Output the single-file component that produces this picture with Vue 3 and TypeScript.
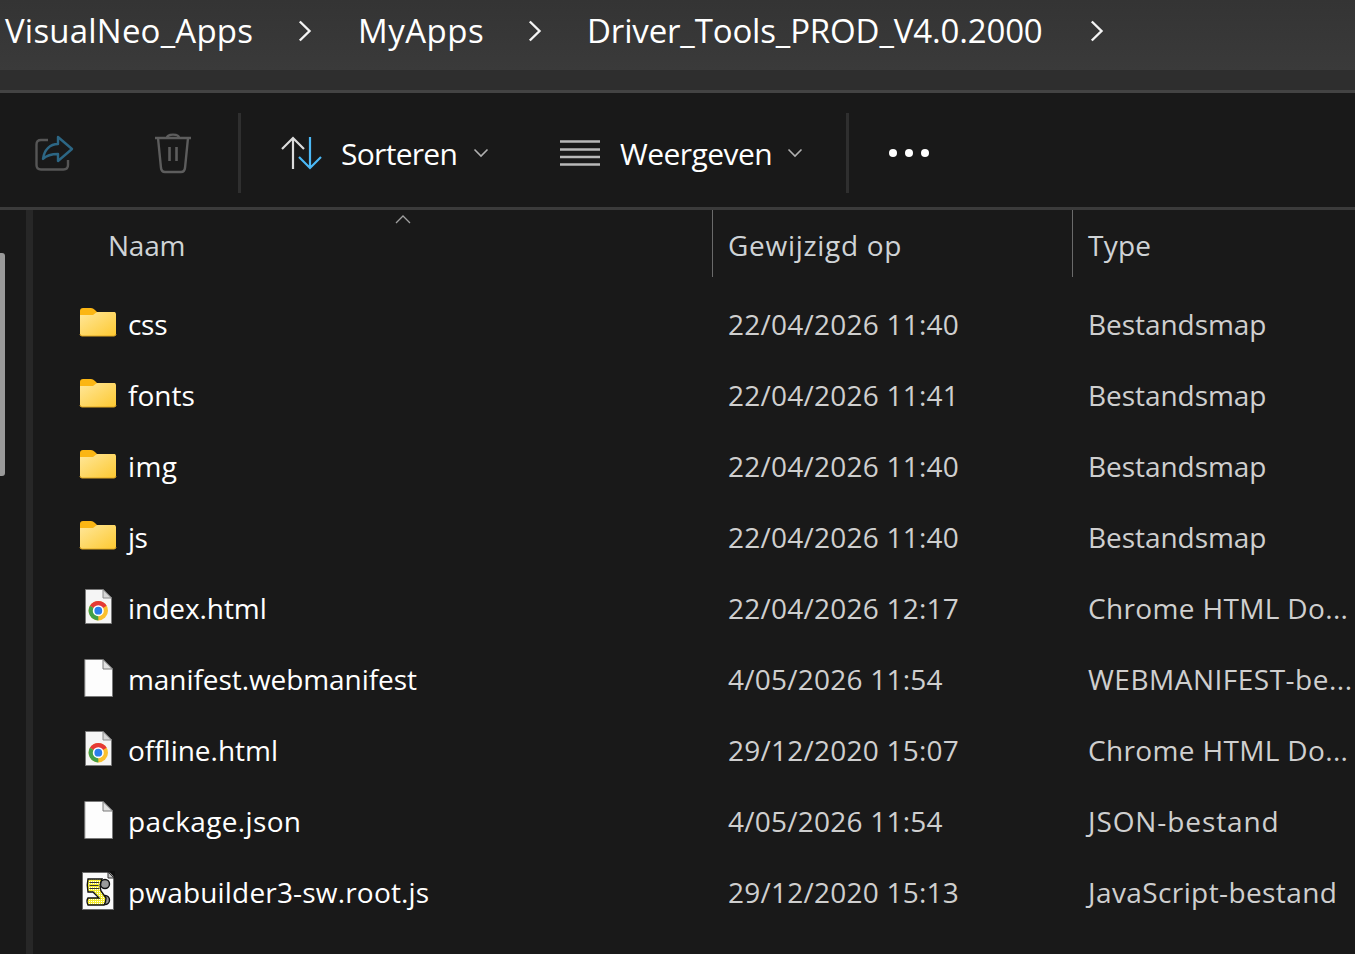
<script setup lang="ts">
type Kind = 'folder' | 'chrome' | 'blank' | 'script'
interface Row { name: string; date: string; type: string; kind: Kind; nameLs: number; typeLs: number }
const crumbs = [
  { label: 'VisualNeo_Apps', cls: 'c1' },
  { label: 'MyApps', cls: 'c2' },
  { label: 'Driver_Tools_PROD_V4.0.2000', cls: 'c3' },
]
const rows: Row[] = [
  { name: 'css', date: '22/04/2026 11:40', type: 'Bestandsmap', kind: 'folder', nameLs: -0.3, typeLs: -0.05 },
  { name: 'fonts', date: '22/04/2026 11:41', type: 'Bestandsmap', kind: 'folder', nameLs: 0, typeLs: -0.05 },
  { name: 'img', date: '22/04/2026 11:40', type: 'Bestandsmap', kind: 'folder', nameLs: 0.4, typeLs: -0.05 },
  { name: 'js', date: '22/04/2026 11:40', type: 'Bestandsmap', kind: 'folder', nameLs: -0.55, typeLs: -0.05 },
  { name: 'index.html', date: '22/04/2026 12:17', type: 'Chrome HTML Do...', kind: 'chrome', nameLs: -0.05, typeLs: 0.35 },
  { name: 'manifest.webmanifest', date: '4/05/2026 11:54', type: 'WEBMANIFEST-be...', kind: 'blank', nameLs: -0.07, typeLs: 0.5 },
  { name: 'offline.html', date: '29/12/2020 15:07', type: 'Chrome HTML Do...', kind: 'chrome', nameLs: -0.02, typeLs: 0.35 },
  { name: 'package.json', date: '4/05/2026 11:54', type: 'JSON-bestand', kind: 'blank', nameLs: 0.36, typeLs: 0.9 },
  { name: 'pwabuilder3-sw.root.js', date: '29/12/2020 15:13', type: 'JavaScript-bestand', kind: 'script', nameLs: 0.18, typeLs: 0.4 },
]
</script>

<template>
  <div class="window">
    <nav class="crumbs">
      <template v-for="c in crumbs" :key="c.label">
        <span class="crumb" :class="c.cls">{{ c.label }}</span>
        <svg class="sep" :class="c.cls" width="14" height="22" viewBox="0 0 14 22" fill="none">
          <path d="M1.800 1.500 L11.500 11 L1.800 20.500" stroke="#f4f4f4" stroke-width="2.400" />
        </svg>
      </template>
    </nav>
    <div class="strip"></div>
    <div class="toolbar">
      <svg class="t-share" width="40" height="38" viewBox="0 0 40 38" fill="none">
        <path d="M14 6 H7 Q2.500 6 2.500 10.500 V31 Q2.500 35.500 7 35.500 H29.500 Q34 35.500 34 31 V26" stroke="#565656" stroke-width="2.400" />
        <path d="M9 25 C10 16 16 10 24 10 V3 L38 15 L24 27 V20 C18 20 13 21 9 25 Z" stroke="#2c6684" stroke-width="2.400" stroke-linejoin="round" />
      </svg>
      <svg class="t-trash" width="38" height="42" viewBox="0 0 38 42" fill="none" stroke="#5d5d5d" stroke-width="2.4">
        <path d="M1 6 H37" />
        <path d="M13 6 C13 1.500 25 1.500 25 6" />
        <path d="M4 6 L7 36 Q7.500 40 11 40 H27 Q30.500 40 31 36 L34 6" />
        <path d="M15.500 15 V29 M22.500 15 V29" stroke-width="2.600" />
      </svg>
      <span class="vline first"></span>
      <svg class="t-sort" width="42" height="34" viewBox="0 0 42 34" fill="none" stroke-width="2.2">
        <path d="M12 33 V2 M1 13 L12 2 L23 13" stroke="#dcdcdc" />
        <path d="M29 1 V32 M18 21 L29 32 L40 21" stroke="#4cb8f5" />
      </svg>
      <span class="t-label sort-l">Sorteren</span>
      <svg class="chev c-a" width="16" height="10" viewBox="0 0 16 10" fill="none">
        <path d="M1.500 1.500 L8 8 L14.500 1.500" stroke="#b0b0b0" stroke-width="1.600" />
      </svg>
      <svg class="t-view" width="40" height="28" viewBox="0 0 40 28" fill="none" stroke="#b8b8b8" stroke-width="2.600">
        <path d="M0 2.500 H40 M0 10.500 H40 M0 18 H40 M0 25.500 H40" />
      </svg>
      <span class="t-label view-l">Weergeven</span>
      <svg class="chev c-b" width="16" height="10" viewBox="0 0 16 10" fill="none">
        <path d="M1.500 1.500 L8 8 L14.500 1.500" stroke="#b0b0b0" stroke-width="1.600" />
      </svg>
      <span class="vline second"></span>
      <div class="dots"><i></i><i></i><i></i></div>
    </div>
    <div class="body">
      <div class="rail"><div class="thumb"></div></div>
      <div class="divider"></div>
      <div class="list">
        <header class="head">
          <div class="hcol hname">
            <span>Naam</span>
            <svg class="caret" width="16" height="9" viewBox="0 0 16 9" fill="none">
              <path d="M1 8 L8 1 L15 8" stroke="#a0a0a0" stroke-width="1.300" />
            </svg>
          </div>
          <div class="hcol hdate"><span>Gewijzigd op</span></div>
          <div class="hcol htype"><span>Type</span></div>
        </header>
        <div v-for="r in rows" :key="r.name" class="row">
          <div class="cell-name">
            <span class="icon">
              <svg v-if="r.kind === 'folder'" width="38" height="42" viewBox="0 0 38 42">
                <defs>
                  <linearGradient id="fold" x1="0" y1="0" x2="1" y2="1">
                    <stop offset="0" stop-color="#ffe79a" />
                    <stop offset="1" stop-color="#fdc931" />
                  </linearGradient>
                </defs>
                <g transform="translate(0 6)">
                  <path d="M1 4 Q1 1 4 1 H12 Q14 1 16 3 L18 5 H36 V10 H1 Z" fill="#fbb614" />
                  <path d="M1 8 H14 L18 5 H35 Q37 5 37 7 V27 Q37 29 35 29 H3 Q1 29 1 27 Z" fill="url(#fold)" />
                  <path d="M1 27 Q1 29 3 29 H35 Q37 29 37 27" fill="none" stroke="#e0a722" stroke-width="1" />
                </g>
              </svg>
              <svg v-else-if="r.kind === 'blank'" width="38" height="42" viewBox="0 0 38 42">
                <path d="M5.800 3.500 H24 L33.500 13 V40.500 H5.800 Z" fill="#fdfdfd" stroke="#7a7a7a" />
                <path d="M24 3.500 V13 H33.500 Z" fill="#e2e2e2" stroke="#7a7a7a" />
              </svg>
              <svg v-else-if="r.kind === 'chrome'" width="38" height="42" viewBox="0 0 38 42">
                <path d="M6.500 4.500 H24 L32.500 13 V38.500 H6.500 Z" fill="#f5f5f5" stroke="#7a7a7a" />
                <path d="M24 4.500 V13 H32.500 Z" fill="#d6d6d6" stroke="#8a8a8a" />
                <circle cx="19.300" cy="25.700" r="9.700" fill="#fbc02d" />
                <path d="M19.300 25.700 L10.900 20.850 A9.700 9.700 0 0 1 27.700 20.850 Z" fill="#e53935" />
                <path d="M19.300 25.700 L10.900 20.850 A9.700 9.700 0 0 0 19.300 35.400 Z" fill="#43a047" />
                <circle cx="19.300" cy="25.700" r="5.500" fill="#fff" />
                <circle cx="19.300" cy="25.700" r="3.900" fill="#2b7de9" />
              </svg>
              <svg v-else width="38" height="42" viewBox="0 0 38 42">
                <defs>
                  <pattern id="dith" width="2" height="2" patternUnits="userSpaceOnUse">
                    <rect width="2" height="2" fill="#f4ec2e" />
                    <rect width="1" height="1" fill="#fff" />
                  </pattern>
                </defs>
                <rect x="3.500" y="3.500" width="31" height="37" fill="#fafafa" stroke="#6a6a6a" />
                <path d="M29 2 H36 V9 Z" fill="#111" />
                <path d="M29 3 L35 9 H29 Z" fill="#c4c4c4" stroke="#333" />
                <circle cx="26" cy="15" r="4.500" fill="#9a9a9a" stroke="#111" stroke-width="1.400" />
                <circle cx="26" cy="31" r="4.500" fill="#9a9a9a" stroke="#111" stroke-width="1.400" />
                <path d="M9 10 H23 Q20 16 22 22 L27 29 Q27 33 25 36 H9 Q7 32 9 29 H20 L14 23 H9 Q7.500 16 9 10 Z" fill="url(#dith)" stroke="#111" stroke-width="1.400" />
                <path d="M10.500 13.500 H20 M10.500 16.500 H19.500 M10.500 19.500 H20" stroke="#333" stroke-width="1.100" />
              </svg>
            </span>
            <span class="t name" :style="{ letterSpacing: r.nameLs + 'px' }">{{ r.name }}</span>
          </div>
          <div class="t cell-date">{{ r.date }}</div>
          <div class="t cell-type" :style="{ letterSpacing: r.typeLs + 'px' }">{{ r.type }}</div>
        </div>
      </div>
    </div>
  </div>
</template>

<style>
html, body { margin: 0; background: #191919; overflow: hidden; }
</style>

<style scoped>
.window {
  width: 1355px;
  height: 954px;
  overflow: hidden;
  background: #191919;
  font-family: "Open Sans", "Noto Sans", sans-serif;
  display: flex;
  flex-direction: column;
}
.crumbs {
  height: 70px;
  flex: none;
  background: linear-gradient(#343434, #3a3a3a);
  display: flex;
  align-items: center;
  padding-left: 5px;
  box-sizing: border-box;
  color: #fff;
  font-size: 33px;
  padding-bottom: 8px;
  white-space: nowrap;
}
.crumb { display: block; position: relative; top: -1px; }
.crumb.c1 { width: 293px; letter-spacing: 0.2px; }
.crumb.c2 { width: 170px; letter-spacing: 0.5px; }
.crumb.c3 { width: 502px; letter-spacing: -0.15px; margin-left: -1px; margin-right: 1px; }
.sep { flex: none; }
.sep.c1 { margin-right: 46px; margin-left: 0; }
.sep.c2 { margin-right: 46px; }
.strip {
  height: 20px;
  flex: none;
  background: #2e2e2e;
}
.toolbar {
  height: 120px;
  flex: none;
  box-sizing: border-box;
  border-top: 3px solid #434343;
  border-bottom: 3px solid #3b3b3b;
  padding-top: 6px;
  background: #191919;
  display: flex;
  align-items: center;
  color: #fff;
  font-size: 30px;
}
.t-share { margin-left: 34px; flex: none; }
.t-trash { margin-left: 80px; flex: none; }
.vline { width: 3px; height: 80px; background: #2f2f2f; flex: none; }
.vline.first { margin-left: 46px; }
.t-sort { margin-left: 40px; flex: none; }
.t-label { white-space: nowrap; color: #fff; }
.sort-l { margin-left: 18px; width: 132px; letter-spacing: -0.7px; }
.view-l { margin-left: 20px; width: 167px; letter-spacing: -0.55px; }
.chev { flex: none; }
.t-view { margin-left: 71px; flex: none; }
.vline.second { margin-left: 43px; }
.dots { margin-left: 40px; display: flex; gap: 8px; }
.dots i { width: 8px; height: 8px; border-radius: 50%; background: #fff; display: block; }
.body { flex: 1; display: flex; min-height: 0; }
.rail { width: 26px; flex: none; }
.thumb { width: 5px; height: 223px; margin-top: 43px; background: #9a9a9a; border-radius: 0 3px 3px 0; }
.divider { width: 7px; flex: none; background: #272727; }
.list { flex: 1; min-width: 0; }
.head {
  height: 67px;
  margin-bottom: 11px;
  display: grid;
  grid-template-columns: 679px 360px 1fr;
  color: #cfd3d6;
  font-size: 28px;
}
.hcol { display: flex; align-items: center; position: relative; white-space: nowrap; padding-top: 2px; box-sizing: border-box; }
.hname { padding-left: 75px; letter-spacing: -0.25px; }
.hdate, .htype { border-left: 1px solid #6a6a6a; padding-left: 15px; }
.hdate { letter-spacing: 0.7px; }
.htype { letter-spacing: 0.25px; }
.caret { position: absolute; left: 362px; top: 5px; }
.row {
  height: 71px;
  display: grid;
  grid-template-columns: 695px 360px 1fr;
  align-items: center;
  color: #dcdcdc;
  font-size: 28px;
}
.t { white-space: nowrap; line-height: 40px; padding-top: 1px; }
.cell-name { display: flex; align-items: center; padding-left: 46px; height: 71px; }
.icon { width: 38px; height: 42px; display: block; align-self: flex-start; margin-top: 13px; flex: none; }
.icon svg { display: block; }
.name { margin-left: 11px; color: #fff; }
.cell-date { color: #cfcfcf; letter-spacing: 0.24px; }
.cell-type { color: #cfcfcf; }
</style>
